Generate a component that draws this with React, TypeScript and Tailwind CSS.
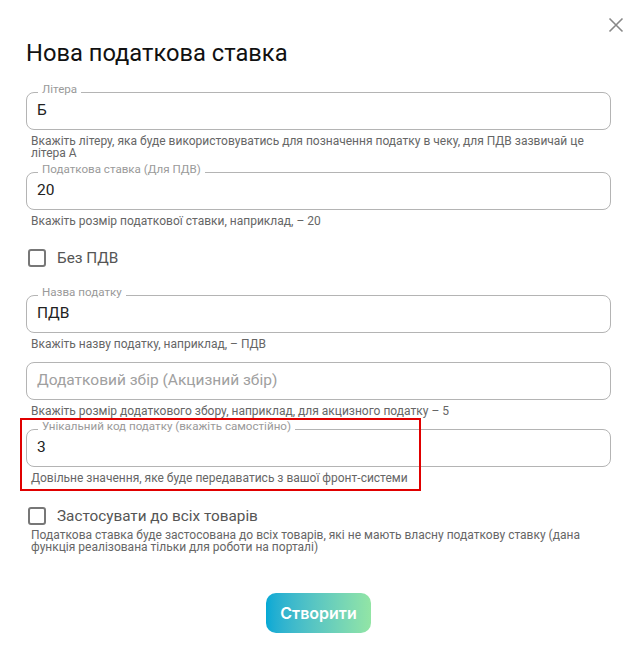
import React from 'react';

type FieldProps = {
  label?: string;
  value?: string;
  placeholder?: string;
  helper: string;
  className?: string;
};

function Field({ label, value, placeholder, helper, className = '' }: FieldProps) {
  return (
    <div className={className}>
      <div className="relative h-[38px] rounded-[8px] border border-[#b4b4b4] px-[10px] flex items-center">
        {label && (
          <span className="absolute left-[11px] -top-[10px] bg-white px-[4px] text-[11.6px] leading-[12px] text-[#9a9a9a]">
            {label}
          </span>
        )}
        {value ? (
          <span className="text-[15.5px] text-[#222]">{value}</span>
        ) : (
          <span className="text-[15.5px] text-[#a0a0a0]">{placeholder}</span>
        )}
      </div>
      <p className="mt-[5px] ml-[5px] text-[12px] leading-[12px] text-[#666]">{helper}</p>
    </div>
  );
}

function Check({ label, className = '' }: { label: string; className?: string }) {
  return (
    <label className={`flex items-center h-[20px] ${className}`}>
      <span className="ml-[2px] w-[18px] h-[18px] rounded-[3px] border-2 border-[#777]" />
      <span className="ml-[11px] text-[15.3px] text-[#555]">{label}</span>
    </label>
  );
}

export default function App() {
  return (
    <div className="relative w-[641px] h-[660px] bg-white font-['Roboto',sans-serif]">
      <button className="absolute right-[17px] top-[17px] text-[#888]">
        <svg width="16" height="16" viewBox="0 0 16 16" fill="none" stroke="currentColor" strokeWidth="1.6">
          <path d="M1.5 1.5l13 13M14.5 1.5l-13 13" />
        </svg>
      </button>

      <div className="px-[26px] pt-[37px] w-[585px] box-content">
        <h2 className="text-[23.7px] leading-[32px] text-[#111]">Нова податкова ставка</h2>

        <Field
          className="mt-[23px]"
          label="Літера"
          value="Б"
          helper="Вкажіть літеру, яка буде використовуватись для позначення податку в чеку, для ПДВ зазвичай це літера А"
        />
        <Field
          className="mt-[13px]"
          label="Податкова ставка (Для ПДВ)"
          value="20"
          helper="Вкажіть розмір податкової ставки, наприклад, – 20"
        />

        <Check className="mt-[21px]" label="Без ПДВ" />

        <Field
          className="mt-[27px]"
          label="Назва податку"
          value="ПДВ"
          helper="Вкажіть назву податку, наприклад, – ПДВ"
        />
        <Field
          className="mt-[12px]"
          placeholder="Додатковий збір (Акцизний збір)"
          helper="Вкажіть розмір додаткового збору, наприклад, для акцизного податку – 5"
        />

        <div className="relative mt-[12px]">
          <Field
            label="Унікальний код податку (вкажіть самостійно)"
            value="3"
            helper="Довільне значення, яке буде передаватись з вашої фронт-системи"
          />
          <div className="absolute -left-[6px] -top-[11px] w-[401px] h-[73px] border-2 border-[#e00000] pointer-events-none" />
        </div>

        <Check className="mt-[22px]" label="Застосувати до всіх товарів" />
        <p className="mt-[3px] ml-[5px] text-[12px] leading-[12px] text-[#666]">
          Податкова ставка буде застосована до всіх товарів, які не мають власну податкову ставку (дана функція реалізована тільки для роботи на порталі)
        </p>

        <div className="mt-[40px] flex justify-center">
          <button className="w-[105px] h-[40px] rounded-[10px] bg-gradient-to-r from-[#03a9d5] to-[#92e5a5] text-white text-[16px] font-semibold font-['Inter',sans-serif]">
            Створити
          </button>
        </div>
      </div>
    </div>
  );
}
